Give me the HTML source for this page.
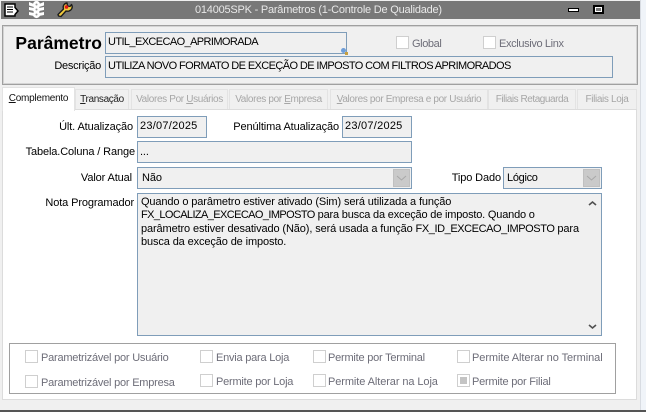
<!DOCTYPE html>
<html><head><meta charset="utf-8">
<style>
html,body{margin:0;padding:0;width:646px;height:412px;overflow:hidden;background:#f0f4f9}
body{position:relative;font-family:"Liberation Sans",sans-serif;font-size:11px;color:#000;letter-spacing:-.12px}
div,span{white-space:nowrap}
div{position:absolute;box-sizing:border-box}
.t{line-height:14px;height:14px}
.r{text-align:right}
.i{background:#f0f0f0;border:1px solid #7f9db9}
.in{line-height:13px;padding:3px 0 0 2px}
.c{letter-spacing:-.6px}
.d{letter-spacing:.25px;padding-left:2px!important}
.tab{top:89px;height:20px;background:#f0f0f0;border:1px solid #e3e3e3;border-bottom:0;color:#a6a6a6;font-size:10px;letter-spacing:-.35px;line-height:20px;text-align:center}
.cb{width:13px;height:13px;background:#fff;border:1px solid #cfcfcf}
.g{color:#6d6d78;letter-spacing:-.22px}
u{text-decoration:underline}
</style></head><body>
<div style="left:0;top:0;width:640px;height:412px;background:#f0f0f0"></div>
<div style="left:1px;top:1px;width:639px;height:18px;background:#787878"></div>
<svg style="position:absolute;left:0;top:0" width="80" height="20">
<path d="M5 4h10v3.500l3 3.500-3 3.500V16H5z" fill="#fff" stroke="#000" stroke-width="1.500"/>
<path d="M7 7h6M7 9.500h6M7 12h6" stroke="#000"/>
<path d="M29 2l5 2v3l-5-1.500zM44 2l-5 2v3l5-1.500zM29 7l5 1v3l-5-1zM44 7l-5 1v3l5-1zM29 12l5 1v3l-5-1zM44 12l-5 1v3l5-1z" fill="#fff"/>
<circle cx="36.500" cy="4.500" r="3.600" fill="#fff"/><circle cx="36.500" cy="9.500" r="3.600" fill="#fff"/><circle cx="36.500" cy="14.500" r="3.600" fill="#fff"/>
<circle cx="36.500" cy="4.500" r="1" fill="#999"/><circle cx="36.500" cy="9.500" r="1" fill="#999"/><circle cx="36.500" cy="14.500" r="1" fill="#999"/>
<path d="M58 14.500l5.500-5.500c-1-3 .5-5.500 3.500-6l.5 3 2.500.5 1.500-2c1.500 2.500.5 5.500-2.500 6.500-1 .3-2 .3-3 0l-5 5.500-2.500-.5z" fill="#f2cb3c" stroke="#1c1c1c" stroke-width="1.400" stroke-linejoin="round"/>
<circle cx="66.500" cy="7" r="1.800" fill="#e01818"/>
</svg>
<div class="t" style="left:195px;top:3px;color:#e8e8e8;letter-spacing:-.22px">014005SPK - Parâmetros (1-Controle De Qualidade)</div>
<div style="left:568px;top:8px;width:11px;height:4px;background:#fff;border:1px solid #000"></div>
<div style="left:593px;top:5px;width:11px;height:9px;background:#fff;border:2px solid #000"></div>
<div style="left:596px;top:8px;width:5px;height:3px;background:#777"></div>

<div style="left:2px;top:25px;width:636px;height:60px;border:1px solid #a0a0a0;box-shadow:inset 0 0 0 1px #d4d4d4"></div>
<div class="t r" style="left:5px;top:33px;width:97px;height:20px;line-height:20px;font-size:17.500px;letter-spacing:0;font-weight:bold">Parâmetro</div>
<div class="t r" style="left:30px;top:59px;width:71px;letter-spacing:-.25px">Descrição</div>
<div class="i in" style="left:105px;top:32px;width:242px;height:22px"><span class="c">UTIL_EXCECAO_APRIMORADA</span></div>
<div style="left:341px;top:48px;width:5px;height:5px;border-radius:50%;background:#6f9ed8"></div>
<div style="left:345px;top:52px;width:3px;height:3px;background:#c8a040"></div>
<div class="i in" style="left:105px;top:56px;width:508px;height:22px"><span class="c">UTILIZA NOVO FORMATO DE EXCEÇÃO DE IMPOSTO COM FILTROS APRIMORADOS</span></div>
<div class="cb" style="left:396px;top:36px"></div>
<div class="t g" style="left:412px;top:37px;letter-spacing:-.4px">Global</div>
<div class="cb" style="left:483px;top:36px"></div>
<div class="t g" style="left:499px;top:37px;letter-spacing:-.36px">Exclusivo Linx</div>

<div style="left:2px;top:109px;width:635px;height:291px;background:#fff;border:1px solid #dcdcdc"></div>
<div class="tab" style="left:75px;width:54px;color:#222"><u>T</u>ransação</div>
<div class="tab" style="left:131px;width:97px">Valores Por <u>U</u>suários</div>
<div class="tab" style="left:229px;width:99px">Valores por <u>E</u>mpresa</div>
<div class="tab" style="left:330px;width:158px"><u>V</u>alores por Empresa e por Usuário</div>
<div class="tab" style="left:488px;width:88px;letter-spacing:-.45px">Filiais Retaguarda</div>
<div class="tab" style="left:577px;width:60px">Filiais Loja</div>
<div style="left:2px;top:87px;width:73px;height:24px;background:#fff;border:1px solid #e3e3e3;border-bottom:0;font-size:10px;letter-spacing:-.25px;line-height:21px;text-align:center;color:#111"><u>C</u>omplemento</div>

<div class="t r" style="left:30px;top:120px;width:103px">Últ. Atualização</div>
<div class="i in d" style="left:137px;top:116px;width:70px;height:22px;padding-top:3px">23/07/2025</div>
<div class="t r" style="left:210px;top:120px;width:129px">Penúltima Atualização</div>
<div class="i in d" style="left:342px;top:116px;width:70px;height:22px;padding-top:3px">23/07/2025</div>
<div class="t r" style="left:10px;top:145px;width:125px">Tabela.Coluna / Range</div>
<div class="i in" style="left:137px;top:141px;width:275px;height:22px;padding-top:4px">...</div>
<div class="t r" style="left:40px;top:171px;width:92px">Valor Atual</div>
<div class="i in" style="left:137px;top:167px;width:275px;height:22px;padding:4px 0 0 4px">Não</div>
<div style="left:393px;top:169px;width:17px;height:18px;background:#cacaca;border:1px solid #c0c0c0"></div>
<svg style="position:absolute;left:393px;top:169px" width="17" height="18"><path d="M4 7l4.500 4 4.500-4" fill="none" stroke="#a8a8a8"/></svg>
<div class="t r" style="left:430px;top:171px;width:71px">Tipo Dado</div>
<div class="i in" style="left:503px;top:167px;width:99px;height:22px;padding:4px 0 0 3px;letter-spacing:-.3px">Lógico</div>
<div style="left:583px;top:169px;width:17px;height:18px;background:#cacaca;border:1px solid #c0c0c0"></div>
<svg style="position:absolute;left:583px;top:169px" width="17" height="18"><path d="M4 7l4.500 4 4.500-4" fill="none" stroke="#a8a8a8"/></svg>
<div class="t r" style="left:20px;top:196px;width:114px">Nota Programador</div>
<div class="i" style="left:137px;top:193px;width:465px;height:143px"></div>
<div class="t" style="left:141px;top:196px;line-height:13.300px;height:56px">Quando o parâmetro estiver ativado (Sim) será utilizada a função<br><span class="c">FX_LOCALIZA_EXCECAO_IMPOSTO</span> <span style="letter-spacing:-.19px">para busca da exceção de imposto. Quando o</span><br>parâmetro estiver desativado (Não), será usada a função <span style="letter-spacing:-.42px">FX_ID_EXCECAO_IMPOSTO</span> para<br>busca da exceção de imposto.</div>
<svg style="position:absolute;left:584px;top:194px" width="17" height="141"><path d="M5 11l3.500-3 3.500 3M5 131l3.500 3 3.500-3" fill="none" stroke="#505050" stroke-width="1.600"/></svg>

<div style="left:9px;top:343px;width:607px;height:51px;border:1px solid #a0a0a0"></div>
<div class="cb" style="left:25px;top:350px"></div><div class="t g" style="left:41px;top:351px">Parametrizável por Usuário</div>
<div class="cb" style="left:200px;top:350px"></div><div class="t g" style="left:216px;top:351px">Envia para Loja</div>
<div class="cb" style="left:313px;top:350px"></div><div class="t g" style="left:328px;top:351px">Permite por Terminal</div>
<div class="cb" style="left:457px;top:350px"></div><div class="t g" style="left:472px;top:351px;letter-spacing:-.07px">Permite Alterar no Terminal</div>
<div class="cb" style="left:25px;top:375px"></div><div class="t g" style="left:41px;top:376px">Parametrizável por Empresa</div>
<div class="cb" style="left:200px;top:374px"></div><div class="t g" style="left:216px;top:375px">Permite por Loja</div>
<div class="cb" style="left:313px;top:374px"></div><div class="t g" style="left:328px;top:375px;letter-spacing:-.09px">Permite Alterar na Loja</div>
<div class="cb" style="left:457px;top:374px"></div><div style="left:460px;top:377px;width:7px;height:7px;background:#c4c4c4"></div><div class="t g" style="left:472px;top:375px">Permite por Filial</div>

<div style="left:0;top:400px;width:640px;height:10px;background:#f0f0f0"></div>
<div style="left:0;top:410px;width:646px;height:2px;background:#555"></div>
<div style="left:640px;top:0;width:1px;height:410px;background:#d8dce2"></div>
</body></html>
